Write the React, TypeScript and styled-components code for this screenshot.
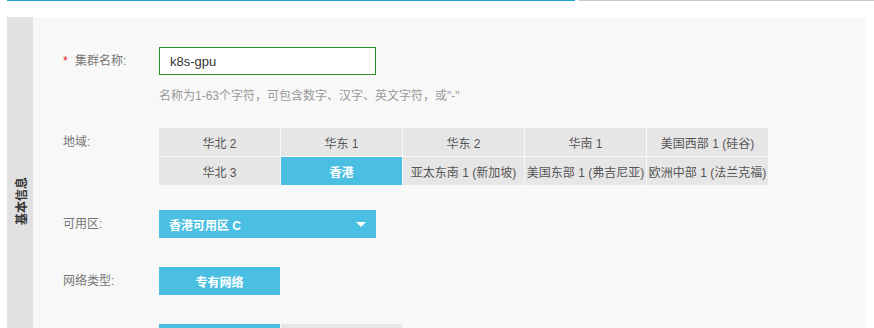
import React from 'react'
import styled, { createGlobalStyle } from 'styled-components'

const regions = [
  '华北 2',
  '华东 1',
  '华东 2',
  '华南 1',
  '美国西部 1 (硅谷)',
  '华北 3',
  '香港',
  '亚太东南 1 (新加坡)',
  '美国东部 1 (弗吉尼亚)',
  '欧洲中部 1 (法兰克福)',
]

const App = () => {
  return (
    <>
      <GlobalStyle />
      <Page>
        <TabLine>
          <TabActive />
          <TabRest />
        </TabLine>
        <Panel>
          <Sidebar>
            <SidebarTitle>基本信息</SidebarTitle>
          </Sidebar>
          <Form>
            <Row>
              <Label>
                <Required>*</Required>集群名称:
              </Label>
              <Field>
                <Input defaultValue="k8s-gpu" />
                <Help>名称为1-63个字符，可包含数字、汉字、英文字符，或"-"</Help>
              </Field>
            </Row>
            <Row $gap={25}>
              <Label>地域:</Label>
              <RegionGrid>
                {regions.map((r) => (
                  <Option key={r} $active={r === '香港'}>
                    {r}
                  </Option>
                ))}
              </RegionGrid>
            </Row>
            <Row $gap={29}>
              <Label>可用区:</Label>
              <Select>
                香港可用区 C
                <Caret />
              </Select>
            </Row>
            <Row $gap={29}>
              <Label>网络类型:</Label>
              <ButtonGroup>
                <Option $active>专有网络</Option>
              </ButtonGroup>
            </Row>
            <Row $gap={0}>
              <Label />
              <ButtonGroup>
                <Option $active />
                <Option />
              </ButtonGroup>
            </Row>
          </Form>
        </Panel>
      </Page>
    </>
  )
}

const GlobalStyle = createGlobalStyle`
  html, body {
    margin: 0;
    background: #ffffff;
  }
  body {
    font-family: 'Liberation Sans', 'Noto Sans CJK SC', sans-serif;
    font-size: 12px;
    color: #555;
  }
`

const Page = styled.div`
  padding: 0 8px 0 7px;
`

const TabLine = styled.div`
  display: flex;
  gap: 4px;
  height: 1px;
  margin-right: -8px;
`

const TabActive = styled.div`
  width: 568px;
  background: #1ea3c9;
`

const TabRest = styled.div`
  flex: 1;
  background: #c8c8c8;
`

const Panel = styled.section`
  display: flex;
  margin-top: 16px;
  background: #f8f8f8;
`

const Sidebar = styled.aside`
  display: flex;
  align-items: center;
  justify-content: center;
  width: 26px;
  flex-shrink: 0;
  background: #e1e1e1;
`

const SidebarTitle = styled.span`
  writing-mode: vertical-rl;
  text-orientation: sideways;
  transform: rotate(180deg);
  font-weight: 700;
  color: #333;
  font-size: 12px;
`

const Form = styled.div`
  flex: 1;
  padding: 30px 0 33px 30px;
`

const Row = styled.div<{ $gap?: number }>`
  display: flex;
  align-items: flex-start;
  margin-bottom: ${(p) => (p.$gap === undefined ? 25 : p.$gap)}px;
`

const Label = styled.div`
  width: 96px;
  flex-shrink: 0;
  line-height: 28px;
  height: 28px;
  color: #777;
`

const Required = styled.span`
  display: inline-block;
  width: 12px;
  color: #e4181b;
`

const Field = styled.div`
  display: flex;
  flex-direction: column;
`

const Input = styled.input`
  box-sizing: border-box;
  width: 217px;
  height: 28px;
  padding: 0 10px;
  border: 1px solid #2a8c2a;
  background: #fff;
  font-family: inherit;
  font-size: 13px;
  color: #333;
  outline: none;
`

const Help = styled.div`
  margin-top: 14px;
  line-height: 14px;
  color: #999;
`

const RegionGrid = styled.div`
  display: grid;
  grid-template-columns: repeat(5, 121px);
  grid-auto-rows: 28px;
  gap: 1px;
`

const ButtonGroup = styled.div`
  display: flex;
  gap: 1px;
  & > * {
    width: 121px;
    height: 28px;
  }
`

const Option = styled.div<{ $active?: boolean }>`
  display: flex;
  align-items: center;
  justify-content: center;
  white-space: nowrap;
  background: ${(p) => (p.$active ? '#4bbfe2' : '#e6e6e6')};
  color: ${(p) => (p.$active ? '#fff' : '#555')};
  font-weight: ${(p) => (p.$active ? 700 : 400)};
`

const Select = styled.div`
  display: flex;
  align-items: center;
  justify-content: space-between;
  box-sizing: border-box;
  width: 217px;
  height: 28px;
  padding: 0 10px;
  background: #4bbfe2;
  color: #fff;
  font-weight: 700;
`

const Caret = styled.span`
  width: 0;
  height: 0;
  border-left: 5px solid transparent;
  border-right: 5px solid transparent;
  border-top: 5px solid #fff;
`

export default App
